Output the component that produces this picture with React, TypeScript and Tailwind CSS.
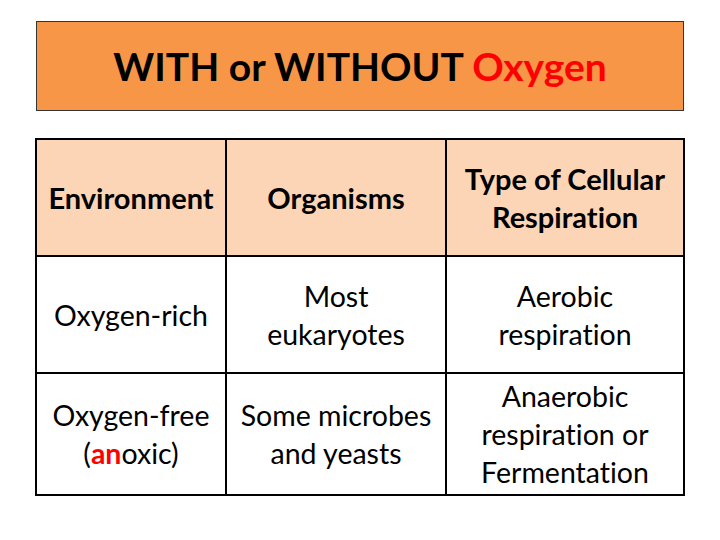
import React from "react";

const font = { fontFamily: "Lato, 'Open Sans', sans-serif" };

const cell = "flex items-center justify-center";

export default function App() {
  return (
    <div className="w-[720px] h-[540px] bg-white relative [font-variant-ligatures:none]" style={font}>
      <div className="pt-[21px] px-[36px]">
        <div className="h-[90px] border border-[#333] bg-[#f79646] flex items-center justify-center">
          <span className="text-[39px] font-bold text-black leading-none">
            WITH or WITHOUT <span className="text-[#ff0000]">Oxygen</span>
          </span>
        </div>
      </div>
      <div className="mt-[27px] mx-[35px] border-2 border-black grid grid-cols-[190px_220px_1fr] grid-rows-[117px_117px_1fr] h-[358px] text-[28.5px] text-black leading-[38px] text-center">
        <div className={`bg-[#fbd5b5] border-r-2 border-b-2 border-black font-bold text-[29px] ${cell}`}><div>Environment</div></div>
        <div className={`bg-[#fbd5b5] border-r-2 border-b-2 border-black font-bold text-[29px] ${cell}`}><div>Organisms</div></div>
        <div className={`bg-[#fbd5b5] border-b-2 border-black font-bold text-[29px] ${cell}`}><div>Type of Cellular<br />Respiration</div></div>
        <div className={`border-r-2 border-b-2 border-black ${cell}`}><div>Oxygen-rich</div></div>
        <div className={`border-r-2 border-b-2 border-black ${cell}`}><div>Most<br />eukaryotes</div></div>
        <div className={`border-b-2 border-black ${cell}`}><div>Aerobic<br />respiration</div></div>
        <div className={`border-r-2 border-black ${cell}`}><div className="whitespace-nowrap">Oxygen-free<br />(<span className="text-[#ff0000] font-bold">an</span>oxic)</div></div>
        <div className={`border-r-2 border-black ${cell}`}><div className="whitespace-nowrap">Some microbes<br />and yeasts</div></div>
        <div className={cell}><div>Anaerobic<br />respiration or<br />Fermentation</div></div>
      </div>
    </div>
  );
}
